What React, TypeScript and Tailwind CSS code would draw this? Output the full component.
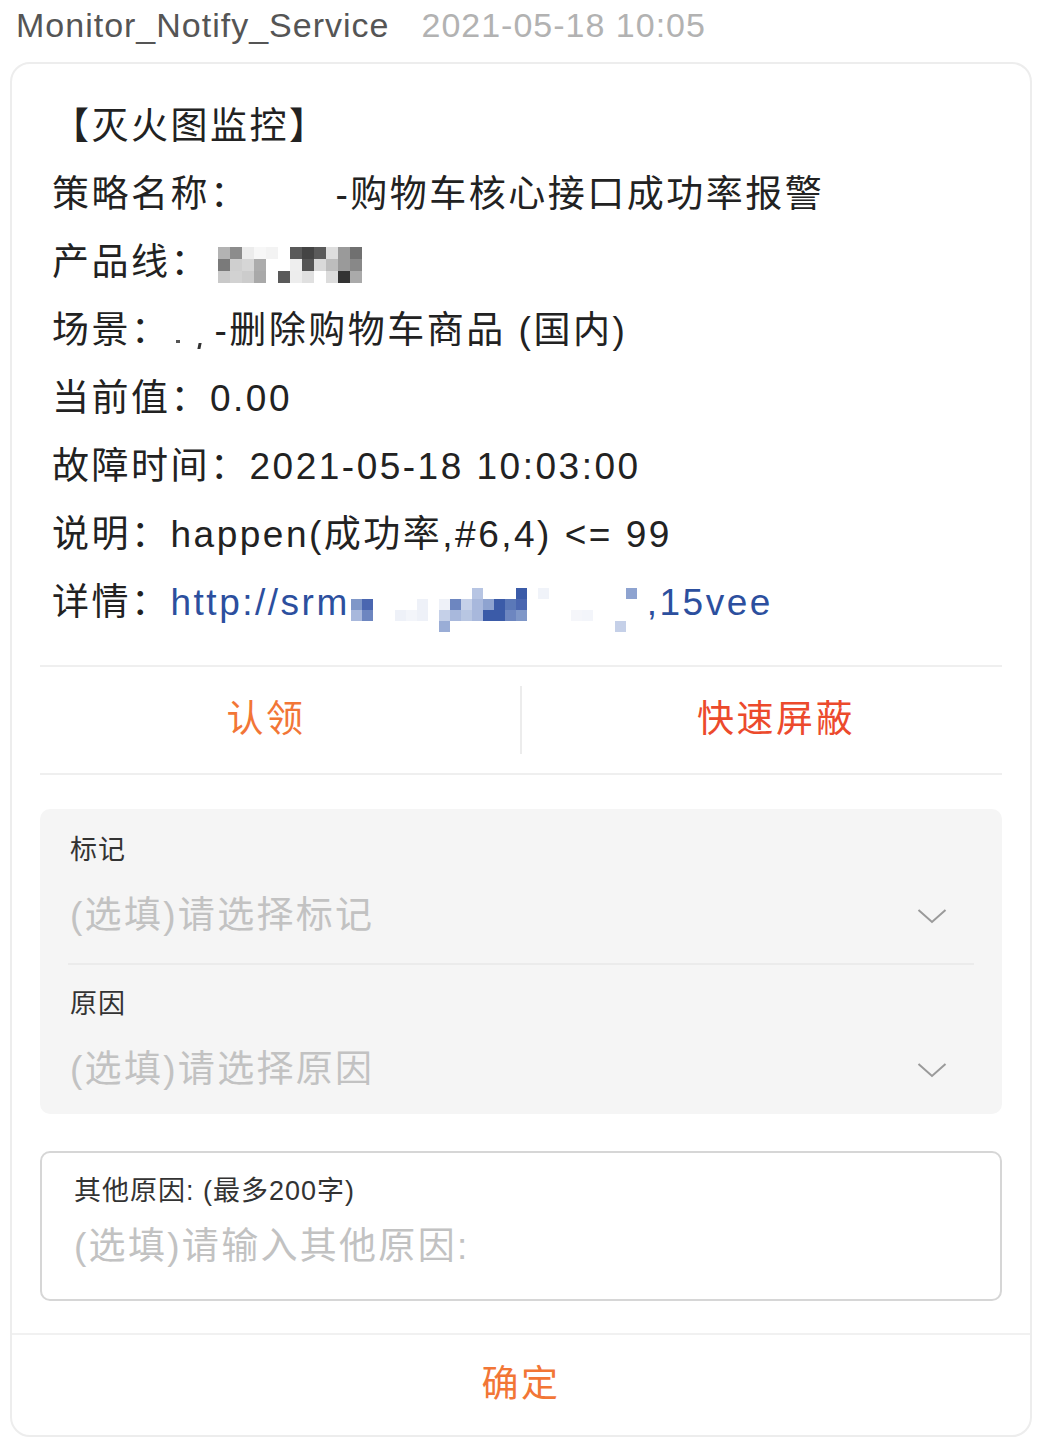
import React from 'react'

const FONT = "font-['Liberation_Sans','Noto_Sans_CJK_SC',sans-serif]"

type MosaicProps = {
  rows: string[][]
  size: number
  className?: string
}

// pixelated (redacted) bits of the screenshot
const Mosaic = ({ rows, size, className = '' }: MosaicProps) => {
  const cols = Math.max(...rows.map((r) => r.length))
  return (
    <div
      className={'grid shrink-0 ' + className}
      style={{ gridTemplateColumns: `repeat(${cols}, ${size}px)`, gridAutoRows: `${size}px` }}
    >
      {rows.map((r, i) =>
        Array.from({ length: cols }).map((_, j) => (
          <div key={i + '-' + j} style={{ backgroundColor: r[j] || 'transparent' }} />
        ))
      )}
    </div>
  )
}

const productLine = [
  ['#b3b3b3', '#8c8c8c', '#ececec', '#f7f7f7', '#f3f3f3', '', '#5a5a5a', '#444444', '#5a5a5a', '#dedede', '#9a9a9a', '#707070'],
  ['#7a7a7a', '#cfcfcf', '#d6d6d6', '#acacac', '', '', '#eeeeee', '#555555', '#d9d9d9', '#bdbdbd', '#9a9a9a', '#888888'],
  ['#c9c9c9', '#d2d2d2', '#cccccc', '#a9a9a9', '', '#5a5a5a', '#ededed', '#e0e0e0', '', '#dcdcdc', '#333333', '#aaaaaa']
]

const B = '#3b5ba8'
const linkBlur = [
  ['', '', '', '', '', '', '', '', '', '', '', '#b7c5e3', '', '', '', B, '', '#f0f3f9', '', '', '', '', '', '', '', '#8ea3d0'],
  ['#7f97c8', '#4a66b0', '', '', '', '', '#eef1f8', '', '#eef1f8', '#6d86c0', '#c5d0e8', '#a8b8dc', '#8ea3d0', B, '#5b78b8', '#4a66b0'],
  ['#a8b8dc', '#6d86c0', '', '', '#eef1f8', '#f3f5fa', '#eef1f8', '', '#c5d0e8', '#a8b8dc', '#b8c6e2', '#a8b8dc', B, B, '#6d86c0', '#7f97c8', '', '', '', '', '#f5f6fa', '#f3f5fa'],
  ['', '', '', '', '', '', '', '', '#9aadd6', '', '', '', '', '', '', '', '', '', '', '', '', '', '', '', '#c5d0e8']
]

const Line = ({ children }: { children: React.ReactNode }) => (
  <div className="flex items-center h-[68px] whitespace-nowrap">{children}</div>
)

const Chevron = () => (
  <svg width="30" height="16" viewBox="0 0 30 16" className="mr-[27px] shrink-0">
    <polyline points="1.5,2 15,14 28.5,2" fill="none" stroke="#9a9a9a" strokeWidth="2" />
  </svg>
)

const SelectRow = ({ label, placeholder, last }: { label: string; placeholder: string; last?: boolean }) => (
  <div className={last ? 'pt-[19px] pb-[16px]' : 'pt-[21px] pb-[19px] border-b-2 border-[#ebebeb]'}>
    <div className="pl-[2px] text-[27px] leading-[40px] tracking-[1px] text-[#333]">{label}</div>
    <div className="mt-[18px] h-[56px] flex items-center justify-between pl-[2px]">
      <span className="text-[37px] tracking-[2.3px] text-[#c2c2c2]">{placeholder}</span>
      <Chevron />
    </div>
  </div>
)

export default function App() {
  return (
    <div className={'bg-white min-h-[1438px] ' + FONT}>
      <div className="h-[50px] flex items-center pl-[16px] text-[34px] tracking-[1px] whitespace-nowrap">
        <span className="text-[#555]">Monitor_Notify_Service</span>
        <span className="ml-[32px] text-[#b2b2b2]">2021-05-18 10:05</span>
      </div>

      <div className="mt-[12px] ml-[10px] w-[1022px] border-2 border-[#ededed] rounded-[20px] bg-white">
        {/* message body */}
        <div className="pt-[29px] pb-[28px] pl-[40px] text-[37px] tracking-[2.5px] text-[#222]">
          <Line>【灭火图监控】</Line>
          <Line>
            策略名称：<span className="ml-[86px]">-购物车核心接口成功率报警</span>
          </Line>
          <Line>
            产品线：
            <Mosaic rows={productLine} size={12} className="ml-[8px] mt-[4px]" />
          </Line>
          <Line>
            场景：
            <span className="ml-[5px] mt-[20px] w-[4px] h-[3px] bg-[#555] inline-block" />
            <span className="ml-[18px] mt-[30px] w-[3px] h-[6px] bg-[#333] -skew-x-12 inline-block" />
            <span className="ml-[14px]">-删除购物车商品 (国内)</span>
          </Line>
          <Line>当前值：0.00</Line>
          <Line>故障时间：2021-05-18 10:03:00</Line>
          <Line>说明：happen(成功率,#6,4) &lt;= 99</Line>
          <Line>
            详情：
            <span className="text-[#2c4f9e]">http://srm</span>
            <Mosaic rows={linkBlur} size={11} className="ml-[1px] mt-[14px]" />
            <span className="ml-[10px] text-[#2c4f9e]">,15vee</span>
          </Line>
        </div>

        <div className="mx-[28px] h-[2px] bg-[#efefef]" />

        {/* actions */}
        <div className="h-[106px] flex items-center text-[37px] tracking-[2.5px]">
          <button className="flex-1 text-[#f27636]">认领</button>
          <div className="w-[2px] h-[68px] bg-[#ececec]" />
          <button className="flex-1 text-[#ec4a2c]">快速屏蔽</button>
        </div>

        <div className="mx-[28px] h-[2px] bg-[#efefef]" />

        {/* selects */}
        <div className="mx-[28px] mt-[34px] bg-[#f5f5f5] rounded-[10px] px-[28px]">
          <SelectRow label="标记" placeholder="(选填)请选择标记" />
          <SelectRow label="原因" placeholder="(选填)请选择原因" last />
        </div>

        {/* other reason */}
        <div className="mx-[28px] mt-[37px] h-[150px] border-2 border-[#d6d6d6] rounded-[10px] pt-[18px] pl-[32px]">
          <div className="text-[27px] leading-[40px] tracking-[1px] text-[#333]">其他原因: (最多200字)</div>
          <div className="mt-[8px] text-[37px] leading-[56px] tracking-[2.3px] text-[#c2c2c2]">(选填)请输入其他原因:</div>
        </div>

        <div className="mt-[32px] border-t-2 border-[#f1f1f1] h-[102px] flex items-center justify-center">
          <button className="text-[37px] tracking-[2.5px] text-[#f27636]">确定</button>
        </div>
      </div>
    </div>
  )
}
